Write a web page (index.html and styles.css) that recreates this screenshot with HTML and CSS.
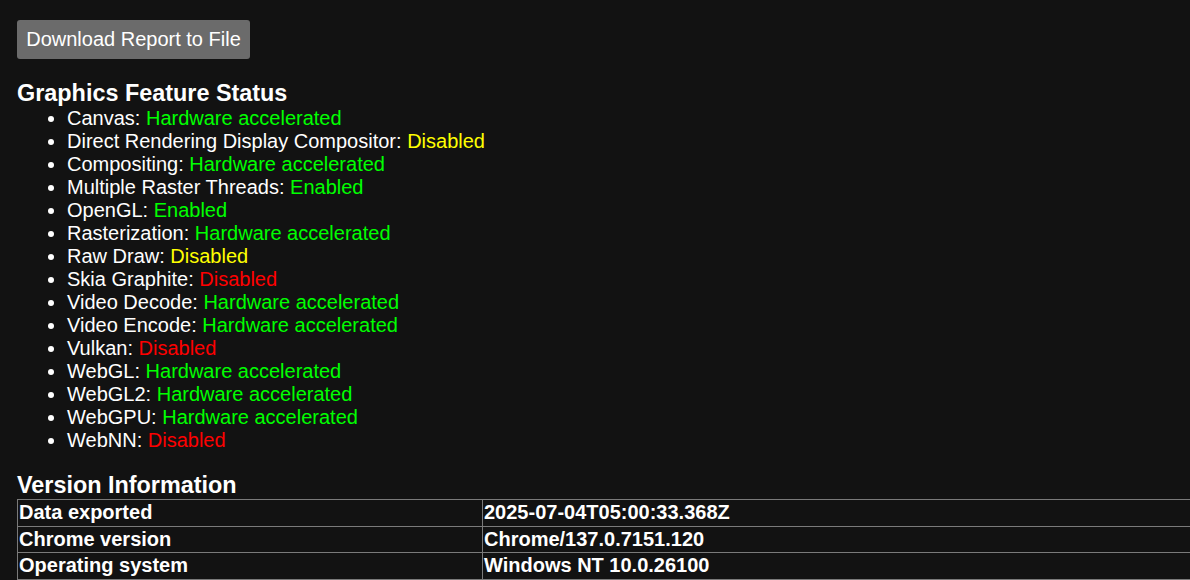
FILE: index.html
```html
<!DOCTYPE html>
<html>
<head>
<meta charset="utf-8">
<link rel="stylesheet" href="styles.css">
</head>
<body>
<div class="page">
  <button class="download">Download Report to File</button>
  <h3 class="title">Graphics Feature Status</h3>
  <ul class="features">
    <li>Canvas: <span class="ok">Hardware accelerated</span></li>
    <li>Direct Rendering Display Compositor: <span class="warn">Disabled</span></li>
    <li>Compositing: <span class="ok">Hardware accelerated</span></li>
    <li>Multiple Raster Threads: <span class="ok">Enabled</span></li>
    <li>OpenGL: <span class="ok">Enabled</span></li>
    <li>Rasterization: <span class="ok">Hardware accelerated</span></li>
    <li>Raw Draw: <span class="warn">Disabled</span></li>
    <li>Skia Graphite: <span class="off">Disabled</span></li>
    <li>Video Decode: <span class="ok">Hardware accelerated</span></li>
    <li>Video Encode: <span class="ok">Hardware accelerated</span></li>
    <li>Vulkan: <span class="off">Disabled</span></li>
    <li>WebGL: <span class="ok">Hardware accelerated</span></li>
    <li>WebGL2: <span class="ok">Hardware accelerated</span></li>
    <li>WebGPU: <span class="ok">Hardware accelerated</span></li>
    <li>WebNN: <span class="off">Disabled</span></li>
  </ul>
  <h3 class="title version">Version Information</h3>
  <table class="info">
    <tr><td class="key">Data exported</td><td>2025-07-04T05:00:33.368Z</td></tr>
    <tr><td class="key">Chrome version</td><td>Chrome/137.0.7151.120</td></tr>
    <tr><td class="key">Operating system</td><td>Windows NT 10.0.26100</td></tr>
  </table>
</div>
</body>
</html>
```

FILE: styles.css
```css
html, body {
  margin: 0;
  padding: 0;
  background: #121212;
  overflow: hidden;
}
body {
  font-family: "Liberation Sans", Arial, sans-serif;
  color: #ffffff;
  font-size: 20px;
}
.page {
  padding: 20px 0 0 17px;
}
.download {
  display: block;
  width: 233px;
  height: 39px;
  padding: 0;
  margin: 0;
  border: none;
  border-radius: 3px;
  background: #6b6b6b;
  color: #ffffff;
  font-family: "Liberation Sans", Arial, sans-serif;
  font-size: 20px;
}
.title {
  margin: 21px 0 0 0;
  font-size: 23.4px;
  line-height: 27px;
  font-weight: bold;
}
.features {
  margin: 0;
  padding-left: 50px;
  line-height: 23px;
}
.ok { color: #00ff00; }
.warn { color: #ffff00; }
.off { color: #ff0000; }
.version {
  margin-top: 20px;
}
.info {
  border-collapse: collapse;
  width: 1600px;
  table-layout: fixed;
}
.info td {
  border: 1px solid #7a7a7a;
  padding: 1px;
  font-weight: bold;
  line-height: 23.5px;
  height: 23.5px;
  white-space: nowrap;
  overflow: hidden;
}
.info td.key {
  width: 462px;
}
```
